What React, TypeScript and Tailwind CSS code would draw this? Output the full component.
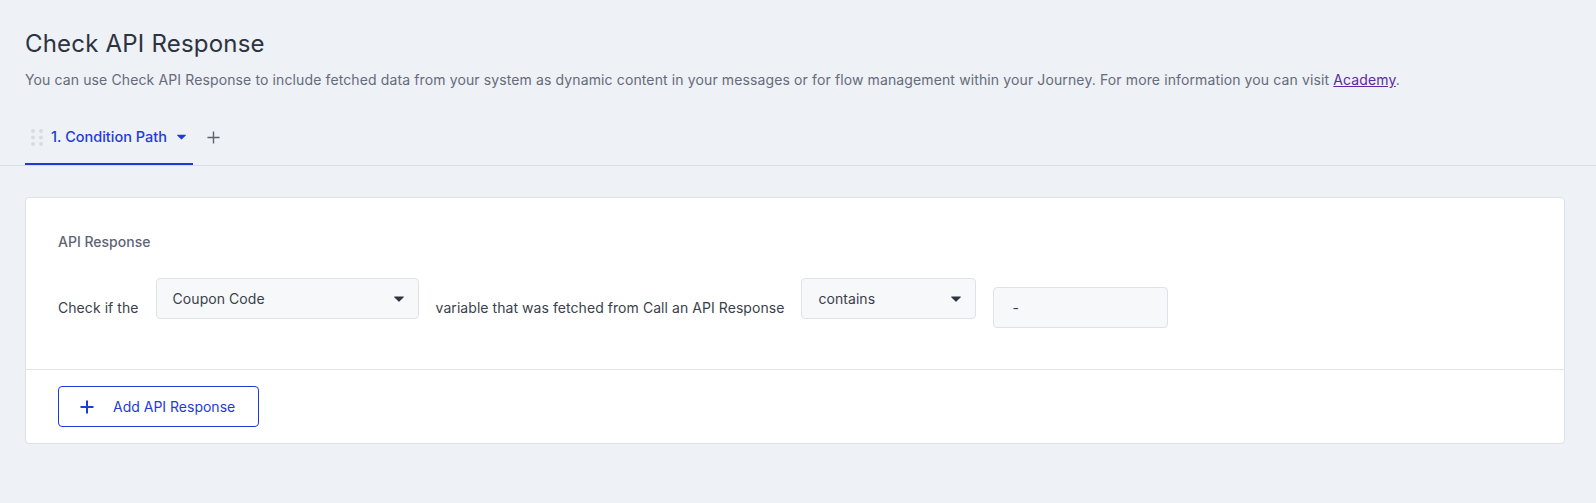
const CaretDown = ({ className }: { className?: string }) => (
  <svg viewBox="0 0 10 6" className={className} aria-hidden>
    <path d="M0.6 0.4h8.8a0.5 0.5 0 0 1 0.38 0.82L5.38 5.55a0.5 0.5 0 0 1-0.76 0L0.22 1.22A0.5 0.5 0 0 1 0.6 0.4z" fill="currentColor" />
  </svg>
);

const PlusIcon = ({ className, stroke = 1.5 }: { className?: string; stroke?: number }) => (
  <svg viewBox="0 0 14 14" className={className} aria-hidden>
    <path d="M7 0.5v13M0.5 7h13" stroke="currentColor" strokeWidth={stroke} fill="none" />
  </svg>
);

const DragHandle = () => (
  <svg viewBox="0 0 12 17" className="h-[17px] w-[12px] text-[#d8dce2]" aria-hidden>
    {[2, 8.5, 15].map((cy) => (
      <g key={cy}>
        <circle cx="2" cy={cy} r="2" fill="currentColor" />
        <circle cx="10" cy={cy} r="2" fill="currentColor" />
      </g>
    ))}
  </svg>
);

function SelectBox({ value, width }: { value: string; width: string }) {
  return (
    <div
      className={`mb-[18px] flex h-[41px] items-center justify-between rounded-[4px] border border-[#dfe2e8] bg-[#f7f8fa] pl-4 pr-[14px] text-[#3a3f4b] ${width}`}
    >
      <span>{value}</span>
      <CaretDown className="h-[6px] w-[10px] text-[#2f3441]" />
    </div>
  );
}

export default function App() {
  return (
    <div className="min-h-screen bg-[#eef1f5] pb-[59px] font-['Inter',sans-serif] antialiased">
      <header className="px-[25px] pt-[28px]">
        <h1 className="text-[24px] leading-8 tracking-[0.2px] text-[#2d3340]">Check API Response</h1>
        <p className="mt-[10px] text-[14px] leading-5 tracking-[0.12px] text-[#656b7b]">
          You can use Check API Response to include fetched data from your system as dynamic content in your
          messages or for flow management within your Journey. For more information you can visit{" "}
          <a href="#" className="text-[#5b2a9e] underline">
            Academy
          </a>
          .
        </p>
      </header>

      <nav className="mt-[35px] flex items-start border-b border-[#d9dde3] pl-[25px]">
        <div className="flex items-center border-b-2 border-[#1f3bd6] pb-[14px] pl-[6px] pr-[7px]">
          <DragHandle />
          <span className="ml-[8px] text-[14.5px] font-medium leading-6 text-[#1f3bd6]">1. Condition Path</span>
          <CaretDown className="ml-[10px] h-[6px] w-[9px] text-[#1f3bd6]" />
        </div>
        <button type="button" className="ml-[14px] flex h-6 items-center text-[#5d6370]">
          <PlusIcon className="h-[13px] w-[13px]" />
        </button>
      </nav>

      <section className="ml-[25px] mr-[31px] mt-[31px] rounded-[4px] border border-[#dde1e7] bg-white">
        <div className="px-8 pb-8 pt-8">
          <h2 className="mb-6 text-[14px] font-medium leading-6 text-[#5e6474]">API Response</h2>
          <div className="flex items-center gap-[17px] text-[14px] tracking-[0.06px] text-[#3a3f4b]">
            <span>Check if the</span>
            <SelectBox value="Coupon Code" width="w-[263px]" />
            <span>variable that was fetched from Call an API Response</span>
            <SelectBox value="contains" width="w-[175px]" />
            <div className="flex h-[41px] w-[175px] items-center rounded-[4px] border border-[#dfe2e8] bg-[#f7f8fa] pl-[18px] text-[#3a3f4b]">
              -
            </div>
          </div>
        </div>
        <div className="border-t border-[#e1e4ea] px-8 py-4">
          <button
            type="button"
            className="flex h-[41px] w-[201px] items-center rounded-[4px] border border-[#1f3bd6] pl-[21px] text-[14px] text-[#1f3bd6]"
          >
            <PlusIcon className="h-[14px] w-[14px]" stroke={2} />
            <span className="ml-[19px]">Add API Response</span>
          </button>
        </div>
      </section>
    </div>
  );
}
